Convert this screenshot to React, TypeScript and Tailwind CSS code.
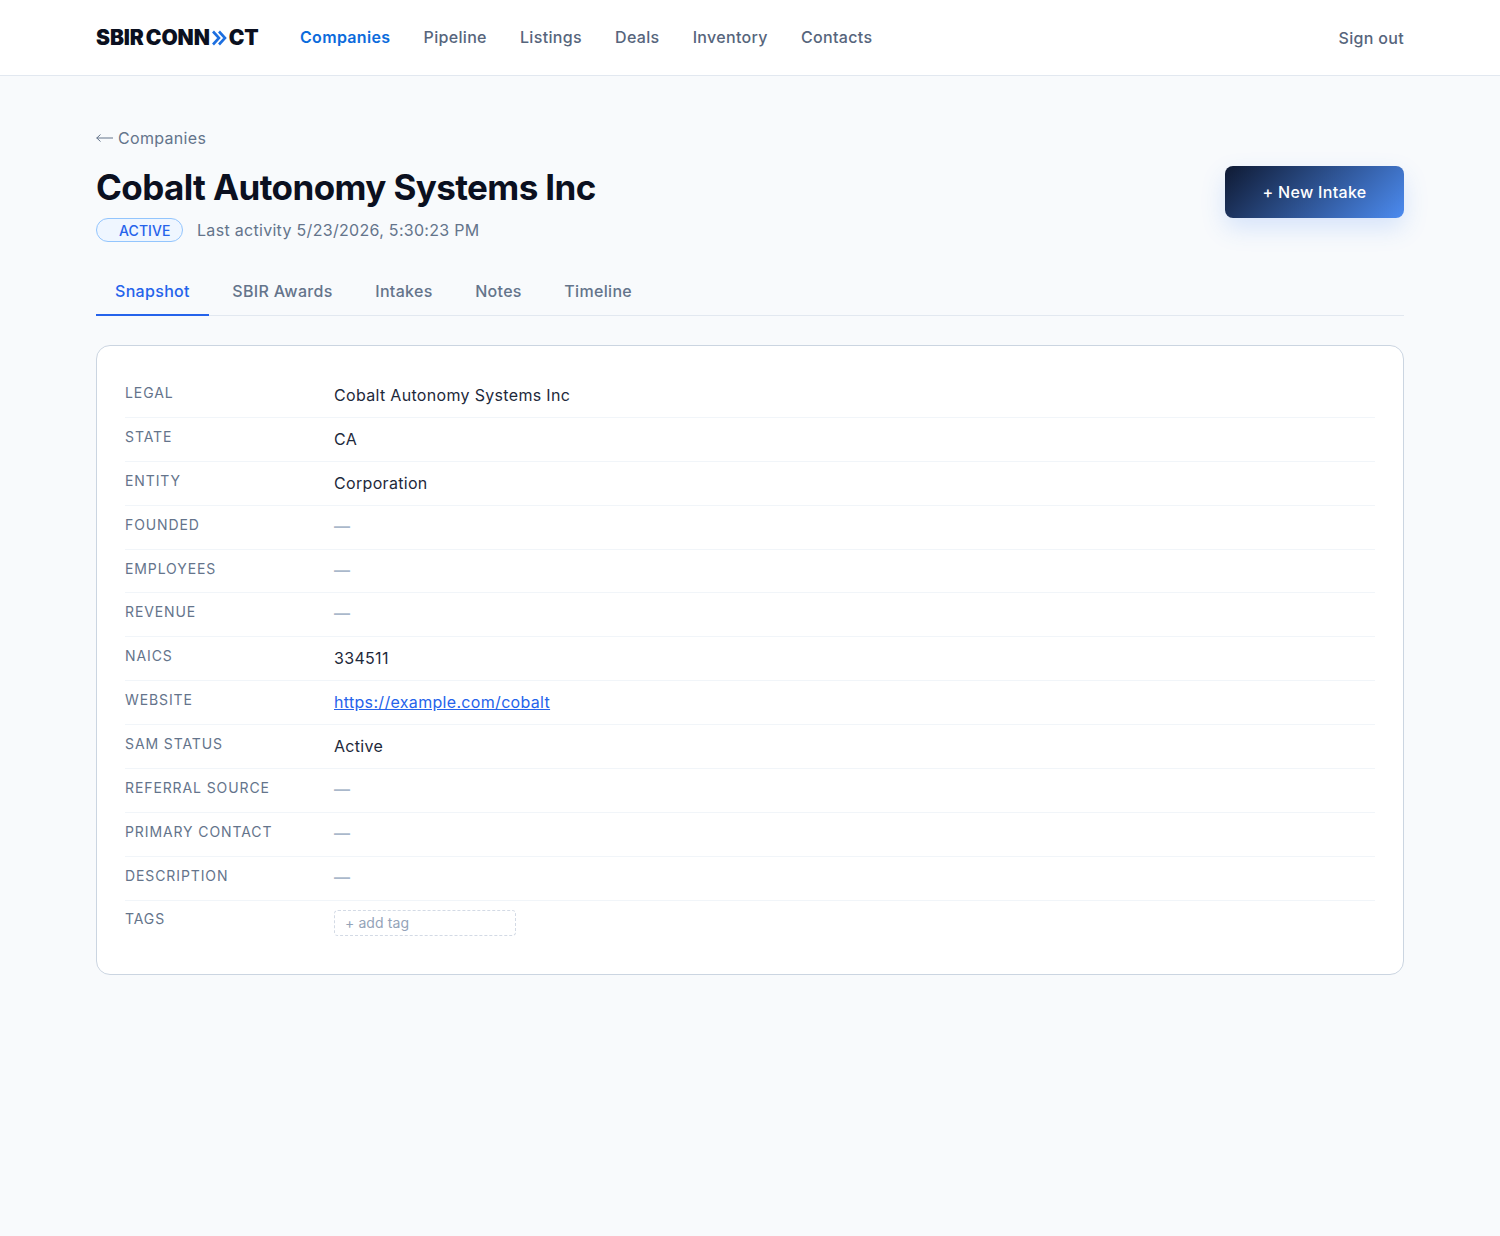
const navLinks = ["Pipeline", "Listings", "Deals", "Inventory", "Contacts"];
const tabs = ["SBIR Awards", "Intakes", "Notes", "Timeline"];

const rows = [
  { label: "Legal", value: "Cobalt Autonomy Systems Inc" },
  { label: "State", value: "CA" },
  { label: "Entity", value: "Corporation" },
  { label: "Founded" },
  { label: "Employees" },
  { label: "Revenue" },
  { label: "NAICS", value: "334511" },
  { label: "Website", href: "https://example.com/cobalt" },
  { label: "SAM Status", value: "Active" },
  { label: "Referral Source" },
  { label: "Primary Contact" },
  { label: "Description" },
];

const App = () => {
  return (
    <div className="min-h-[1236px] bg-[#f8fafc] font-['Inter',sans-serif] tracking-[0.32px] text-[#0f172a]">
      {/* Top nav */}
      <header className="h-[76px] bg-white border-b border-[#e2e8f0]">
        <div className="h-full px-[96px] flex items-center justify-between">
          <a className="w-[162px] shrink-0 flex items-center whitespace-nowrap text-[21px] font-black tracking-[-0.1px] [word-spacing:-2px] text-[#0b1020]">
            <span>SBIR CONN</span>
            <svg className="ml-[2px] mr-[2px] shrink-0" width="15" height="16" viewBox="0 0 15 16" fill="none" stroke="#1d6fe0" strokeWidth="2.6">
              <path d="M1 1.5l6 6.5-6 6.5" />
              <path d="M7 1.5l6 6.5-6 6.5" />
            </svg>
            <span>CT</span>
          </a>
          <nav className="ml-[42px] mr-auto pb-[2px] flex items-center gap-[33.2px] text-[16px] text-[#56657c]">
            <a className="font-semibold text-[#0b6bdc]">Companies</a>
            {navLinks.map((link) => (
              <a key={link} className="font-medium">{link}</a>
            ))}
          </nav>
          <a className="text-[16px] font-medium text-[#56657c]">Sign out</a>
        </div>
      </header>

      <main className="px-[96px] pt-[51px]">
        <a className="flex items-center gap-[5px] text-[16px] leading-[22px] text-[#64748b]">
          <svg width="17" height="10" viewBox="0 0 17 10" fill="none" stroke="#64748b" strokeWidth="1">
            <path d="M0.5 5H17" />
            <path d="M4.5 1.5L0.8 5l3.7 3.5" />
          </svg>
          <span>Companies</span>
        </a>

        <div className="mt-[16px] flex items-start justify-between">
          <div>
            <h1 className="text-[35px] leading-[44px] font-bold tracking-[-0.6px] text-[#0b1020]">
              Cobalt Autonomy Systems Inc
            </h1>
            <div className="mt-[9px] flex items-center gap-[14px]">
              <span className="w-[87px] h-[24px] pl-[22px] flex items-center rounded-full border border-[#93c5fd] bg-[#eff6ff] text-[14px] font-medium tracking-[0.1px] text-[#2563eb]">
                ACTIVE
              </span>
              <span className="text-[16px] tracking-[0.3px] text-[#64748b]">Last activity 5/23/2026, 5:30:23 PM</span>
            </div>
          </div>
          <button className="mt-[1px] w-[179px] h-[52px] rounded-[8px] bg-[linear-gradient(135deg,#0f1a33,#4c8bf0)] text-[16px] font-medium text-white shadow-[0_10px_24px_rgba(59,130,246,0.18)]">
            + New Intake
          </button>
        </div>

        {/* Tabs */}
        <div className="mt-[26px] flex gap-[4.5px] border-b border-[#e2e8f0] text-[16px] font-medium">
          <a className="h-[48px] px-[19px] flex items-center border-b-2 border-[#2563eb] -mb-px text-[#2563eb]">Snapshot</a>
          {tabs.map((tab) => (
            <a key={tab} className="h-[48px] px-[19px] flex items-center border-b-2 border-transparent -mb-px text-[#64748b]">{tab}</a>
          ))}
        </div>

        {/* Snapshot card */}
        <section className="mt-[29px] rounded-[14px] border border-[#cbd5e1] bg-white px-[28px] pt-[28px] pb-[38px]">
          {rows.map((row) => (
            <div key={row.label} className="h-[43.9px] flex border-b border-[#f1f5f9]">
              <div className="w-[209px] shrink-0 pt-[9px] text-[14px] leading-[20px] uppercase tracking-[0.9px] text-[#64748b]">
                {row.label}
              </div>
              <div className="pt-[9px] text-[16px] leading-[24px] text-[#1e293b]">
                {row.href ? (
                  <a className="text-[#2563eb] underline">{row.href}</a>
                ) : row.value ? (
                  row.value
                ) : (
                  <span className="block -mt-px font-bold text-[#aab8cb]">—</span>
                )}
              </div>
            </div>
          ))}
          <div className="flex pt-[8px]">
            <div className="w-[209px] shrink-0 text-[14px] leading-[20px] uppercase tracking-[0.9px] text-[#64748b]">Tags</div>
            <div className="mt-[1px] w-[182px] h-[26px] pl-[10px] flex items-center rounded-[4px] border-[1.5px] border-dashed border-[#d3dae5] text-[14px] tracking-[0.1px] text-[#94a3b8]">
              + add tag
            </div>
          </div>
        </section>
      </main>
    </div>
  );
};

export default App;
